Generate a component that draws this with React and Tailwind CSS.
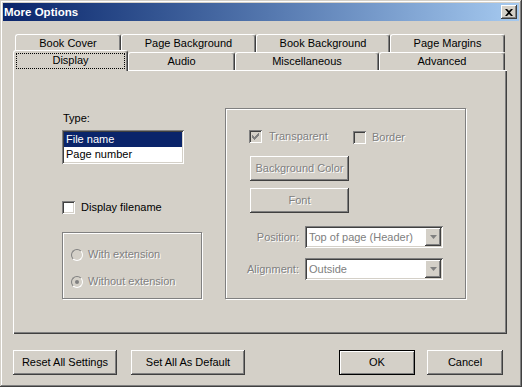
import React from "react";

const raised = "shadow-[inset_-1px_-1px_0_#404040,inset_1px_1px_0_#fff,inset_-2px_-2px_0_#808080]";
const sunken = "shadow-[inset_1px_1px_0_#808080,inset_-1px_-1px_0_#fff,inset_2px_2px_0_#404040,inset_-2px_-2px_0_#d4d0c8]";
const etched = "border border-[#808080] shadow-[1px_1px_0_#fff,inset_1px_1px_0_#fff]";
const dim = "text-[#808080] [text-shadow:1px_1px_0_#fff]";

function Tab({ label, w }) {
  return (
    <div
      className={`h-[18px] flex items-center justify-center rounded-t-[3px] border-t border-l border-r border-t-white border-l-white border-r-[#404040] shadow-[inset_-1px_0_0_#808080] ${w}`}
    >
      {label}
    </div>
  );
}

function Check({ checked, disabled, label, gap }) {
  return (
    <div className="flex items-center h-[13px]">
      <div className={`w-[13px] h-[13px] flex items-center justify-center ${sunken} ${disabled ? "bg-[#d4d0c8]" : "bg-white"}`}>
        {checked && (
          <svg width="7" height="7" viewBox="0 0 7 7">
            <path d="M0 2h1v1h1v1h1V3h1V2h1V1h1V0h1v3H6v1H5v1H4v1H3v1H2V6H1V5H0z" fill="#808080" />
          </svg>
        )}
      </div>
      <span className={`${gap} ${disabled ? dim : ""}`}>{label}</span>
    </div>
  );
}

function Radio({ checked, label }) {
  return (
    <div className="flex items-center h-[13px]">
      <div className="w-[12px] h-[12px] rounded-full border border-t-[#808080] border-l-[#808080] border-b-white border-r-white bg-[#d4d0c8] flex items-center justify-center">
        {checked && <div className="w-[4px] h-[4px] rounded-full bg-[#808080]" />}
      </div>
      <span className={`ml-[5px] ${dim}`}>{label}</span>
    </div>
  );
}

function Button({ label, w, disabled, def }) {
  if (def) {
    return (
      <div className={`h-[25px] ${w} border border-black flex items-center justify-center shadow-[inset_1px_1px_0_#fff,inset_-1px_-1px_0_#808080]`}>
        {label}
      </div>
    );
  }
  return (
    <div className={`h-[25px] ${w} flex items-center justify-center ${raised} ${disabled ? dim : ""}`}>
      {label}
    </div>
  );
}

function Combo({ value }) {
  return (
    <div className={`w-[138px] h-[22px] bg-white flex items-center p-[2px] ${sunken}`}>
      <span className="flex-1 pl-[2px] text-[#808080]">{value}</span>
      <div className={`w-[16px] h-[18px] bg-[#d4d0c8] flex items-center justify-center ${raised}`}>
        <svg width="7" height="4" viewBox="0 0 7 4">
          <path d="M0 0h7L3.5 4z" fill="#808080" />
        </svg>
      </div>
    </div>
  );
}

export default function App() {
  return (
    <div
      className="w-[522px] h-[387px] bg-[#d4d0c8] p-[3px] text-[11px] leading-[13px] text-black shadow-[inset_-1px_-1px_0_#404040,inset_1px_1px_0_#d4d0c8,inset_-2px_-2px_0_#808080,inset_2px_2px_0_#fff]"
      style={{ fontFamily: '"Liberation Sans", Arial, sans-serif' }}
    >
      <div className="h-[18px] bg-linear-to-r from-[#0a246a] to-[#a6caf0] flex items-center justify-between pl-[1px] pr-[2px]">
        <span className="text-white font-bold text-[11.5px]">More Options</span>
        <div className={`w-[16px] h-[14px] bg-[#d4d0c8] flex items-center justify-center ${raised}`}>
          <svg width="8" height="7" viewBox="0 0 8 7">
            <path d="M0 0h2l2 2 2-2h2L5 3.5 8 7H6L4 5 2 7H0l3-3.5z" fill="#000" />
          </svg>
        </div>
      </div>

      <div className="pl-[10px] pt-[13px]">
        <div className="flex ml-[2px]">
          <Tab label="Book Cover" w="w-[106px]" />
          <Tab label="Page Background" w="w-[135px]" />
          <Tab label="Book Background" w="w-[134px]" />
          <Tab label="Page Margins" w="w-[115px]" />
        </div>
        <div className="flex items-end h-[18px]">
          <div className="relative z-10 w-[115px] h-[21px] -mb-[1px] bg-[#d4d0c8] rounded-t-[3px] border-t border-l border-r border-t-white border-l-white border-r-[#404040] shadow-[inset_-1px_0_0_#808080] flex pt-[2px] pl-[2px] pr-[2px] pb-[2px]">
            <div className="flex-1 border border-dotted border-black flex items-center justify-center pb-[2px]">
              Display
            </div>
          </div>
          <Tab label="Audio" w="w-[107px]" />
          <Tab label="Miscellaneous" w="w-[144px]" />
          <Tab label="Advanced" w="w-[126px]" />
        </div>

        <div className="w-[494px] h-[264px] flex shadow-[inset_1px_1px_0_#fff,inset_-1px_-1px_0_#404040,inset_-2px_-2px_0_#808080]">
          <div className="w-[212px] pl-[49px] pt-[42px] flex flex-col">
            <div className="pl-[1px]">Type:</div>
            <div className={`mt-[5px] w-[122px] h-[34px] bg-white p-[2px] ${sunken}`}>
              <div className="h-[15px] bg-[#0a246a] text-white flex items-center px-[2px]">File name</div>
              <div className="h-[15px] flex items-center px-[2px]">Page number</div>
            </div>
            <div className="mt-[37px]">
              <Check label="Display filename" gap="ml-[6px]" />
            </div>
            <div className={`mt-[18px] w-[140px] h-[67px] ${etched} flex flex-col pl-[8px] pt-[15px] gap-[14px]`}>
              <Radio label="With extension" />
              <Radio label="Without extension" checked />
            </div>
          </div>

          <div className="pt-[38px]">
            <div className={`w-[241px] h-[191px] ${etched} flex flex-col`}>
              <div className="flex pl-[23px] pt-[21px]">
                <div className="w-[104px]">
                  <Check checked disabled label="Transparent" gap="ml-[7px]" />
                </div>
                <div className="pt-[1px]">
                  <Check disabled label="Border" gap="ml-[6px]" />
                </div>
              </div>
              <div className="pl-[24px] pt-[12px] flex flex-col gap-[7px]">
                <Button label="Background Color" w="w-[99px]" disabled />
                <Button label="Font" w="w-[99px]" disabled />
              </div>
              <div className="flex items-center mt-[13px]">
                <span className={`w-[73px] text-right ${dim}`}>Position:</span>
                <div className="ml-[6px]">
                  <Combo value="Top of page (Header)" />
                </div>
              </div>
              <div className="flex items-center mt-[10px]">
                <span className={`w-[73px] text-right ${dim}`}>Alignment:</span>
                <div className="ml-[6px]">
                  <Combo value="Outside" />
                </div>
              </div>
            </div>
          </div>
        </div>

        <div className="flex mt-[16px]">
          <Button label="Reset All Settings" w="w-[104px]" />
          <div className="ml-[14px]">
            <Button label="Set All As Default" w="w-[114px]" />
          </div>
          <div className="ml-[94px]">
            <Button label="OK" w="w-[76px]" def />
          </div>
          <div className="ml-[12px]">
            <Button label="Cancel" w="w-[76px]" />
          </div>
        </div>
      </div>
    </div>
  );
}
